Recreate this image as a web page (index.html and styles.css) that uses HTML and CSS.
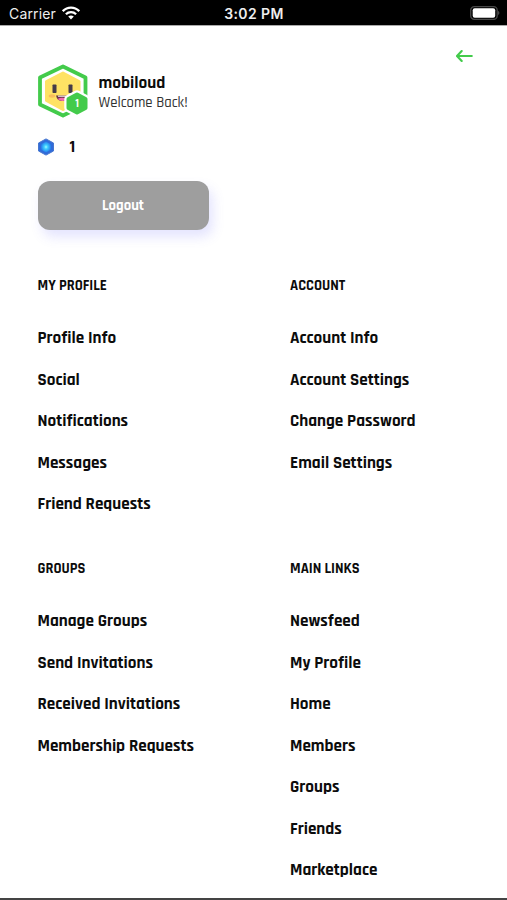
FILE: index.html
```html
<!DOCTYPE html>
<html lang="en">
<head>
<meta charset="utf-8">
<title>Account menu</title>
<link rel="stylesheet" href="styles.css">
</head>
<body>
<div class="screen">
  <header class="status">
    <div class="carrier"><span class="carrier-name">Carrier</span>
      <svg width="18" height="14" viewBox="0 0 18 14" fill="none" stroke="#fff" stroke-width="2.3"><path d="M.8 5.2C5.4.5 12.600.5 17.200 5.200M3.900 8.300C6.700 5.500 11.300 5.500 14.100 8.300"/><path d="M6.200 10.600Q9 8.200 11.800 10.600L9 13.500Z" fill="#fff" stroke="none"/></svg>
    </div>
    <span class="time">3:02 PM</span>
    <svg class="battery" width="30" height="14" viewBox="0 0 30 14"><rect x=".7" y=".7" width="26.500" height="12.600" rx="3.600" fill="#000" stroke="#484848" stroke-width="1.300"/><rect x="2.700" y="2.300" width="22.500" height="9.400" rx="2" fill="#fff"/><path d="M28.300 4.800Q30.300 7 28.300 9.200Z" fill="#666"/></svg>
  </header>
  <main class="menu">
    <button class="back" aria-label="Back"><svg width="18" height="14" viewBox="0 0 18 14" fill="none" stroke="#43cb4b" stroke-width="2.100" stroke-linecap="round" stroke-linejoin="round"><path d="M15.800 7H2M5.700 2 1 7l4.700 5"/></svg></button>
    <section class="user">
      <svg class="avatar" width="52" height="54" viewBox="0 0 52 54">
        <path d="M25 2.500 47.500 13.500V40.500L25 51.500 2 40.500V13.500Z" fill="#fff" stroke="#43cb4b" stroke-width="3.800" stroke-linejoin="round"/>
        <path d="M25 9 41 17.500V36.500L25 45.500 8.500 36.500V17.500Z" fill="#fee264" stroke="#fee264" stroke-width="3" stroke-linejoin="round"/>
        <ellipse cx="14" cy="32" rx="3.300" ry="1.700" fill="#f8bd5c"/>
        <rect x="14.500" y="20.500" width="4" height="8.500" rx=".8" fill="#443b49"/><rect x="30.500" y="20.500" width="4" height="8.500" rx=".8" fill="#443b49"/>
        <path d="M18 31.500H31Q30 37 24.500 37 19 37 18 31.500Z" fill="#6b3547"/><path d="M20 31.700h8v1h-8z" fill="#fff"/><path d="M19.500 35Q24 32.500 29 35 25 39 19.500 35Z" fill="#f56ab0"/>
        <path d="M39 30.500 47.500 35V44L39 48.500 30.500 44V35Z" fill="#43cb4b" stroke="#fff" stroke-width="8.500" stroke-linejoin="round"/>
        <path d="M39 30.500 47.500 35V44L39 48.500 30.500 44V35Z" fill="#43cb4b" stroke="#43cb4b" stroke-width="4" stroke-linejoin="round"/>
        <text class="level" x="39" y="43.200" text-anchor="middle">1</text>
      </svg>
      <div class="identity"><strong class="name">mobiloud</strong><span class="welcome">Welcome Back!</span></div>
    </section>
    <div class="credits">
      <svg width="18" height="18" viewBox="0 0 18 18"><defs><radialGradient id="gem"><stop offset="0" stop-color="#a0f8ff"/><stop offset=".35" stop-color="#40d0ff"/><stop offset="1" stop-color="#247be9"/></radialGradient></defs><path d="M9 .9 16.500 5V13L9 17.100 1.500 13V5Z" fill="#316bd9" stroke="#4677cf" stroke-linejoin="round"/><path d="M9 3.500 14 6.300V11.700L9 14.500 4 11.700V6.300Z" fill="url(#gem)"/></svg>
      <span>1</span>
    </div>
    <button class="logout">Logout</button>
    <nav class="links">
      <section class="group"><h2>MY PROFILE</h2><ul><li>Profile Info</li><li>Social</li><li>Notifications</li><li>Messages</li><li>Friend Requests</li></ul></section>
      <section class="group"><h2>ACCOUNT</h2><ul><li>Account Info</li><li>Account Settings</li><li>Change Password</li><li>Email Settings</li></ul></section>
      <section class="group"><h2>GROUPS</h2><ul><li>Manage Groups</li><li>Send Invitations</li><li>Received Invitations</li><li>Membership Requests</li></ul></section>
      <section class="group"><h2>MAIN LINKS</h2><ul><li>Newsfeed</li><li>My Profile</li><li>Home</li><li>Members</li><li>Groups</li><li>Friends</li><li>Marketplace</li></ul></section>
    </nav>
  </main>
</div>
</body>
</html>
```
FILE: styles.css
```css
* { box-sizing: border-box; }
body { margin: 0; background: #fff; color: #0c0c0c; font-family: Rajdhani, Roboto, sans-serif; }
button { border: 0; padding: 0; font: inherit; }
.screen { height: 900px; overflow: hidden; border-bottom: 2px solid #444; }
.status { height: 26px; padding: 0 7px 0 9px; display: grid; grid-template-columns: 1fr auto 1fr; align-items: center; background: #000; border-bottom: 1px solid #aaa; color: #eee; font: 14px/24px Inter, sans-serif; }
.carrier { display: flex; align-items: center; gap: 6px; }
.carrier-name { letter-spacing: .15px; padding-top: 2px; }
.time { font-weight: 600; letter-spacing: .4px; padding-top: 2px; margin-left: -1px; }
.battery { justify-self: end; }
.menu { padding: 22px 33px 0 37.500px; display: flex; flex-direction: column; }
.back { height: 16px; width: 18px; align-self: flex-end; display: flex; align-items: center; background: none; }
.user { height: 54px; display: flex; gap: 9px; }
.avatar { flex: none; }
.level { font: 700 11px Rajdhani, Roboto, sans-serif; fill: #fff; }
.identity { padding-top: 9px; display: flex; flex-direction: column; }
.name { font-size: 17.200px; line-height: 20px; }
.welcome { font-size: 14.700px; line-height: 20px; font-weight: 500; color: #333; }
.credits { height: 20px; margin-top: 19px; display: flex; align-items: center; gap: 14.500px; font-size: 17px; font-weight: 700; }
.credits svg { margin-left: -.5px; }
.logout { width: 171px; height: 49px; margin-top: 23.500px; border-radius: 12px; background: #9e9e9e; color: #fff; font-size: 14.700px; font-weight: 700; box-shadow: 4px 7px 12px rgba(97, 93, 250, .17); }
.links { margin-top: 46px; display: grid; grid-template-columns: 252.500px 1fr; row-gap: 33px; }
.group h2 { margin: 0 0 22.500px; font-size: 14.650px; line-height: 20px; font-weight: 700; }
.group ul { margin: 0; padding: 0; list-style: none; }
.group li { height: 41.500px; line-height: 41.500px; font-size: 17.120px; font-weight: 700; white-space: nowrap; }
```
